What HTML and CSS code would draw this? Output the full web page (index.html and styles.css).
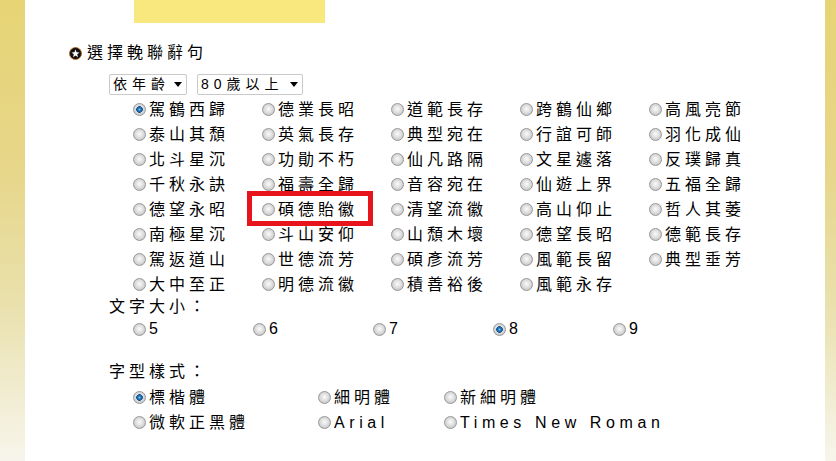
FILE: index.html
```html
<!DOCTYPE html>
<html lang="zh-Hant">
<head>
<meta charset="utf-8">
<title>選擇輓聯辭句</title>
<link rel="stylesheet" href="styles.css">
</head>
<body>
<div class="page">
  <div class="side side-left"></div>
  <main class="content">
    <div class="banner"></div>
    <section class="form">
      <h2 class="title">
        <svg class="star" width="13" height="13" viewBox="0 0 13 13" aria-hidden="true">
          <circle cx="6.5" cy="6.5" r="6" fill="#111" stroke="#b8661c" stroke-width="0.9"/>
          <polygon fill="#fff" points="6.5,2.6 7.56,5.34 10.49,5.5 8.21,7.36 8.97,10.2 6.5,8.6 4.03,10.2 4.79,7.36 2.51,5.5 5.44,5.34"/>
        </svg>
        <span>選擇輓聯辭句</span>
      </h2>
      <div class="selects">
        <span class="select-wrap w1"><select><option>依年齡</option></select></span>
        <span class="select-wrap w2"><select><option>80歲以上</option></select></span>
      </div>
      <div class="phrases">
        <label class="opt"><input type="radio" name="p" checked>駕鶴西歸</label>
        <label class="opt"><input type="radio" name="p">德業長昭</label>
        <label class="opt"><input type="radio" name="p">道範長存</label>
        <label class="opt"><input type="radio" name="p">跨鶴仙鄉</label>
        <label class="opt"><input type="radio" name="p">高風亮節</label>
        <label class="opt"><input type="radio" name="p">泰山其頹</label>
        <label class="opt"><input type="radio" name="p">英氣長存</label>
        <label class="opt"><input type="radio" name="p">典型宛在</label>
        <label class="opt"><input type="radio" name="p">行誼可師</label>
        <label class="opt"><input type="radio" name="p">羽化成仙</label>
        <label class="opt"><input type="radio" name="p">北斗星沉</label>
        <label class="opt"><input type="radio" name="p">功勛不朽</label>
        <label class="opt"><input type="radio" name="p">仙凡路隔</label>
        <label class="opt"><input type="radio" name="p">文星遽落</label>
        <label class="opt"><input type="radio" name="p">反璞歸真</label>
        <label class="opt"><input type="radio" name="p">千秋永訣</label>
        <label class="opt"><input type="radio" name="p">福壽全歸</label>
        <label class="opt"><input type="radio" name="p">音容宛在</label>
        <label class="opt"><input type="radio" name="p">仙遊上界</label>
        <label class="opt"><input type="radio" name="p">五福全歸</label>
        <label class="opt"><input type="radio" name="p">德望永昭</label>
        <label class="opt highlight"><input type="radio" name="p">碩德貽徽</label>
        <label class="opt"><input type="radio" name="p">清望流徽</label>
        <label class="opt"><input type="radio" name="p">高山仰止</label>
        <label class="opt"><input type="radio" name="p">哲人其萎</label>
        <label class="opt"><input type="radio" name="p">南極星沉</label>
        <label class="opt"><input type="radio" name="p">斗山安仰</label>
        <label class="opt"><input type="radio" name="p">山頹木壞</label>
        <label class="opt"><input type="radio" name="p">德望長昭</label>
        <label class="opt"><input type="radio" name="p">德範長存</label>
        <label class="opt"><input type="radio" name="p">駕返道山</label>
        <label class="opt"><input type="radio" name="p">世德流芳</label>
        <label class="opt"><input type="radio" name="p">碩彥流芳</label>
        <label class="opt"><input type="radio" name="p">風範長留</label>
        <label class="opt"><input type="radio" name="p">典型垂芳</label>
        <label class="opt"><input type="radio" name="p">大中至正</label>
        <label class="opt"><input type="radio" name="p">明德流徽</label>
        <label class="opt"><input type="radio" name="p">積善裕後</label>
        <label class="opt"><input type="radio" name="p">風範永存</label>
      </div>
      <div class="caption">文字大小：</div>
      <div class="sizes">
        <label class="opt num"><input type="radio" name="s">5</label>
        <label class="opt num"><input type="radio" name="s">6</label>
        <label class="opt num"><input type="radio" name="s">7</label>
        <label class="opt num"><input type="radio" name="s" checked>8</label>
        <label class="opt num"><input type="radio" name="s">9</label>
      </div>
      <div class="caption caption-font">字型樣式：</div>
      <div class="fonts">
        <label class="opt"><input type="radio" name="f" checked>標楷體</label>
        <label class="opt"><input type="radio" name="f">細明體</label>
        <label class="opt"><input type="radio" name="f">新細明體</label>
        <label class="opt"><input type="radio" name="f">微軟正黑體</label>
        <label class="opt latin"><input type="radio" name="f">Arial</label>
        <label class="opt latin"><input type="radio" name="f">Times New Roman</label>
      </div>
    </section>
  </main>
  <div class="side side-right"></div>
</div>
</body>
</html>
```
FILE: styles.css
```css
html, body {
  margin: 0;
  padding: 0;
}

body {
  font-family: "Liberation Sans", "Noto Sans CJK TC", sans-serif;
  color: #000;
  background: #fff;
}

.page {
  display: flex;
  min-height: 461px;
  height: 461px;
  overflow: hidden;
}

.side {
  flex: none;
  background: linear-gradient(#e6d475 0%, #e7d688 35%, #e9e0ab 65%, #f7f5ec 100%);
}

.side-left {
  width: 25px;
}

.side-right {
  width: 11px;
}

.content {
  flex: 1;
  background: #fff;
}

.banner {
  margin-left: 109px;
  width: 191px;
  height: 23px;
  background: #f9e87e;
}

.form {
  padding-left: 43px;
}

.title {
  margin: 20px 0 0;
  height: 20px;
  display: flex;
  align-items: center;
  gap: 5px;
  font-size: 16px;
  font-weight: normal;
  letter-spacing: 4px;
  line-height: 20px;
}

.star {
  display: block;
  flex: none;
  margin-left: 1px;
}

.selects {
  margin: 11px 0 0 41px;
  height: 21px;
  display: flex;
  gap: 10px;
}

.select-wrap {
  position: relative;
  display: block;
  height: 21px;
}

.select-wrap.w1 { width: 78px; }
.select-wrap.w2 { width: 106px; }

.select-wrap select {
  appearance: none;
  -webkit-appearance: none;
  width: 100%;
  height: 21px;
  margin: 0;
  padding: 0 0 0 3px;
  border: 1px solid #c9c9c9;
  border-radius: 2px;
  background: #fff;
  color: #000;
  font-family: "Liberation Sans", "Noto Sans CJK TC", sans-serif;
  font-size: 14px;
  letter-spacing: 5px;
  line-height: 19px;
  box-sizing: border-box;
}

.select-wrap::after {
  content: "";
  position: absolute;
  right: 5px;
  top: 8px;
  border-left: 4px solid transparent;
  border-right: 4px solid transparent;
  border-top: 5px solid #000;
  pointer-events: none;
}

.phrases {
  margin: 2px 0 0 65px;
  display: grid;
  grid-template-columns: repeat(5, 129px);
  grid-auto-rows: 25px;
}

.opt {
  display: flex;
  align-items: center;
  gap: 3px;
  height: 25px;
  font-size: 16px;
  letter-spacing: 4px;
  line-height: 20px;
  white-space: nowrap;
}

.opt input[type="radio"] {
  appearance: none;
  -webkit-appearance: none;
  flex: none;
  margin: 0;
  width: 13px;
  height: 13px;
  border-radius: 50%;
  border: 1px solid #979797;
  box-sizing: border-box;
  background: radial-gradient(circle at 50% 45%, #fbfbfb 0, #e2e2e2 40%, #c9c9c9 75%, #b4b4b4 100%);
}

.opt input[type="radio"]:checked {
  background:
    radial-gradient(circle at 50% 50%, #7fc4f2 0, #2a7fc4 1.4px, #114f8c 3px, rgba(17, 79, 140, 0) 3.6px),
    radial-gradient(circle at 50% 45%, #fbfbfb 0, #e2e2e2 40%, #c9c9c9 75%, #b4b4b4 100%);
}

.highlight {
  position: relative;
}

.highlight::after {
  content: "";
  position: absolute;
  left: -15px;
  top: -6px;
  width: 126px;
  height: 35px;
  border: 5px solid #e8141c;
  box-sizing: border-box;
  pointer-events: none;
}

.caption {
  margin-left: 41px;
  height: 20px;
  font-size: 16px;
  letter-spacing: 4px;
  line-height: 20px;
}

.sizes {
  margin-left: 65px;
  display: grid;
  grid-template-columns: repeat(5, 120px);
}

.sizes .opt {
  height: 24px;
}

.num {
  letter-spacing: 0;
}

.caption-font {
  margin-top: 21px;
}

.fonts {
  margin: 3px 0 0 65px;
  display: grid;
  grid-template-columns: 185px 126px auto;
  grid-auto-rows: 25px;
}

.latin {
  letter-spacing: 4.6px;
}
```
